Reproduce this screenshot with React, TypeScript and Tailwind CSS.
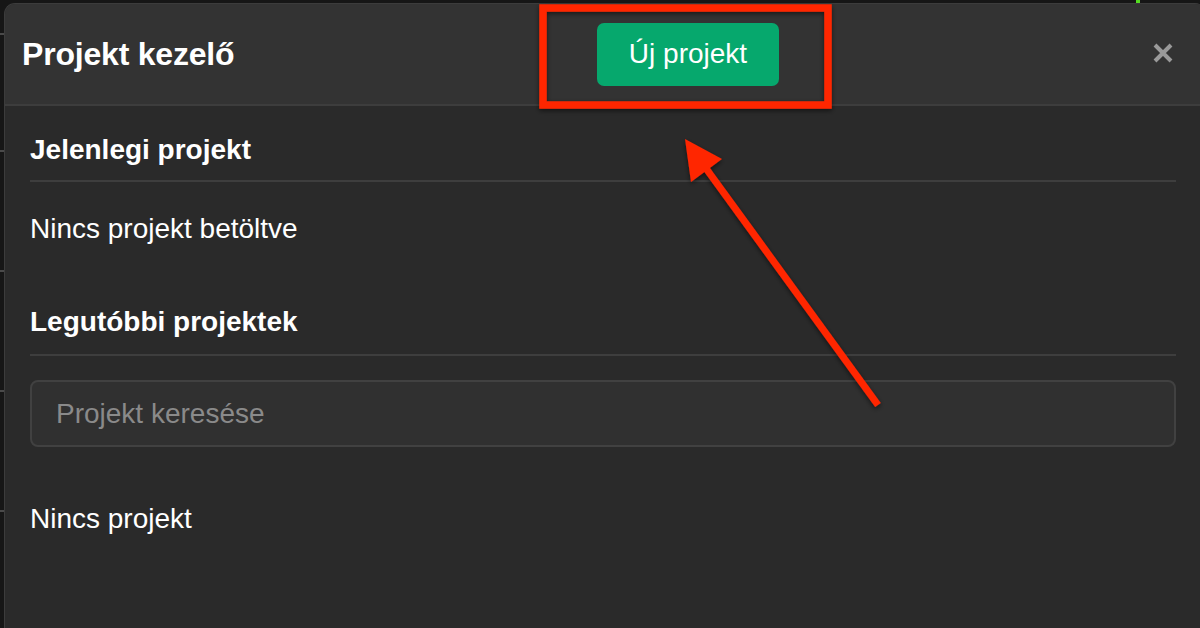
import React from "react";

const font = { fontFamily: '"Liberation Sans", Arial, Helvetica, sans-serif' };

export default function App() {
  return (
    <div
      className="relative w-[1200px] h-[628px] overflow-hidden bg-[#161616] flex"
      style={font}
    >
      {/* left strip of underlying app */}
      <div className="w-[4px] shrink-0 flex flex-col">
        <div className="h-[33px]" />
        <div className="h-[2px] bg-[#4a4a4a]" />
        <div className="h-[115px]" />
        <div className="h-[2px] bg-[#4a4a4a]" />
        <div className="h-[118px]" />
        <div className="h-[2px] bg-[#4a4a4a]" />
        <div className="h-[118px]" />
        <div className="h-[2px] bg-[#4a4a4a]" />
        <div className="h-[118px]" />
        <div className="h-[2px] bg-[#4a4a4a]" />
      </div>

      {/* modal */}
      <div className="mt-[3px] flex-1 mr-[-6px] flex flex-col rounded-t-[11px] border-l border-t border-[#3c3c3c] bg-[#2a2a2a] overflow-hidden">
        <div className="h-[102px] shrink-0 bg-[#333333] border-b-2 border-[#3d3d3d] flex items-center pl-[17px] pr-[32px]">
          <div className="flex-1 text-white font-bold text-[32px] leading-[32px] tracking-[-0.2px]">
            Projekt kezelő
          </div>
          <button className="w-[182px] h-[63px] rounded-[7px] bg-[#06a86d] text-white text-[28px] leading-[32px] mr-[373px]">
            Új projekt
          </button>
          <svg width="22" height="22" viewBox="0 0 22 22" className="mt-[-2px]">
            <path d="M3 3 L19 19 M19 3 L3 19" stroke="#9a9a9a" strokeWidth="4" strokeLinecap="butt" />
          </svg>
        </div>

        <div className="flex-1 pl-[25px] pr-[30px] pt-[28px] flex flex-col">
          <div className="text-white font-bold text-[28px] leading-[32px]">Jelenlegi projekt</div>
          <div className="mt-[14px] h-[2px] bg-[#3e3e3e]" />
          <div className="mt-[31px] text-white text-[28px] leading-[32px]">Nincs projekt betöltve</div>
          <div className="mt-[61px] text-white font-bold text-[28px] leading-[32px]">Legutóbbi projektek</div>
          <div className="mt-[16px] h-[2px] bg-[#3e3e3e]" />
          <div className="mt-[24px] h-[67px] rounded-[8px] border-2 border-[#414141] bg-[#303030] flex items-center pl-[24px]">
            <span className="text-[#8a8a8a] text-[28px] leading-[32px]">Projekt keresése</span>
          </div>
          <div className="mt-[56px] text-white text-[28px] leading-[32px]">Nincs projekt</div>
        </div>
      </div>

      {/* green dot of underlying app */}
      <div className="absolute left-[1136px] top-0 w-[4px] h-[3px] bg-[#55dd22]" />

      {/* annotation overlay */}
      <svg
        className="absolute left-0 top-0 pointer-events-none"
        width="1200"
        height="628"
        viewBox="0 0 1200 628"
      >
        <defs>
          <filter id="sh" x="-20%" y="-20%" width="140%" height="140%">
            <feDropShadow dx="0" dy="2" stdDeviation="2.5" floodColor="#000" floodOpacity="0.55" />
          </filter>
        </defs>
        <g filter="url(#sh)">
          <rect x="543" y="8" width="285" height="97" fill="none" stroke="#ff2600" strokeWidth="7.5" />
          <line x1="878" y1="405" x2="705" y2="167" stroke="#ff2600" strokeWidth="7" />
          <polygon points="685,139 722,159 691,182" fill="#ff2600" />
        </g>
      </svg>
    </div>
  );
}
